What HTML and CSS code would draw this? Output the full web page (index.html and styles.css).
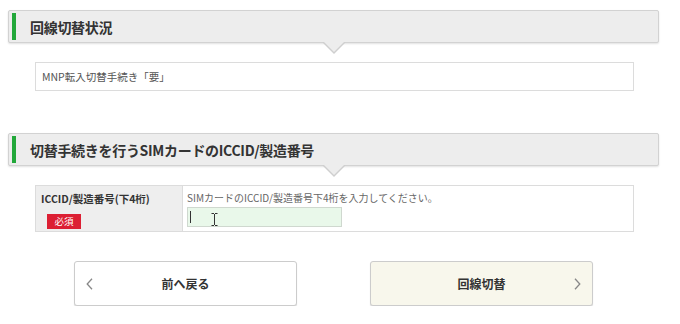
FILE: index.html
```html
<!DOCTYPE html>
<html lang="ja">
<head>
<meta charset="utf-8">
<link rel="stylesheet" href="styles.css">
</head>
<body>
<div class="page">
  <div class="section-head">
    <span class="bar"></span>
    <h2 class="title">回線切替状況</h2>
  </div>
  <div class="status-box">MNP転入切替手続き「要」</div>

  <div class="section-head second">
    <span class="bar"></span>
    <h2 class="title">切替手続きを行うSIMカードのICCID/製造番号</h2>
  </div>
  <div class="form-table">
    <div class="label-cell">
      <div class="label-text">ICCID/製造番号(下4桁)</div>
      <span class="badge">必須</span>
    </div>
    <div class="value-cell">
      <div class="hint">SIMカードのICCID/製造番号下4桁を入力してください。</div>
      <div class="input">
        <span class="caret"></span>
        <svg class="ibeam" width="7" height="13" viewBox="0 0 7 13"><path d="M0.5 0.5h2.5M4 0.5h2.5M3.5 1v11M0.5 12.5h2.5M4 12.5h2.5" stroke="#333" stroke-width="1" fill="none"/></svg>
      </div>
    </div>
  </div>

  <div class="buttons">
    <div class="btn back">
      <svg class="chev left" width="7" height="12" viewBox="0 0 7 12"><path d="M6 0.8L1.2 6L6 11.2" stroke="#888" stroke-width="1.3" fill="none"/></svg>
      <span class="btn-label">前へ戻る</span>
    </div>
    <div class="btn next">
      <span class="btn-label">回線切替</span>
      <svg class="chev right" width="7" height="12" viewBox="0 0 7 12"><path d="M1 0.8L5.8 6L1 11.2" stroke="#888" stroke-width="1.3" fill="none"/></svg>
    </div>
  </div>
</div>
</body>
</html>
```
FILE: styles.css
```css
* { box-sizing: border-box; }
body {
  margin: 0;
  background: #fff;
  font-family: "Noto Sans CJK JP", "Noto Sans", sans-serif;
  color: #333;
}
.page {
  width: 651px;
  margin-left: 8px;
  padding-top: 10px;
}
.section-head {
  position: relative;
  height: 33px;
  background: #ededed;
  border: 1px solid #d2d2d2;
  border-radius: 2px;
  box-shadow: 0 1px 2px rgba(0,0,0,0.12);
  display: flex;
  align-items: stretch;
  padding: 2px 3px;
}
.section-head::before,
.section-head::after {
  content: "";
  position: absolute;
  left: 50%;
  width: 0;
  height: 0;
  border-style: solid;
  border-color: transparent;
}
.section-head::before {
  bottom: -12px;
  margin-left: -12px;
  border-width: 12px 12px 0 12px;
  border-top-color: #cfcfcf;
}
.section-head::after {
  bottom: -10px;
  margin-left: -11px;
  border-width: 11px 11px 0 11px;
  border-top-color: #ededed;
}
.bar {
  width: 4px;
  background: #22a83a;
}
.title {
  margin: 0 0 0 14px;
  align-self: center;
  font-size: 14px;
  font-weight: bold;
  color: #333;
  letter-spacing: -0.3px;
}
.second { margin-top: 42px; }
.status-box {
  margin: 19px 0 0 27px;
  width: 599px;
  height: 29px;
  border: 1px solid #dcdcdc;
  display: flex;
  align-items: center;
  padding-left: 6px;
  font-size: 10.5px;
  color: #555;
}
.form-table {
  margin: 19px 0 0 27px;
  width: 599px;
  height: 47px;
  border: 1px solid #dcdcdc;
  display: flex;
}
.label-cell {
  width: 147px;
  background: #eeeeee;
  border-right: 1px solid #dcdcdc;
  padding: 6px 0 0 5px;
}
.label-text {
  font-size: 10.5px;
  font-weight: bold;
  color: #333;
  line-height: 14px;
}
.badge {
  display: inline-block;
  margin: 3px 0 0 6px;
  width: 34px;
  height: 15px;
  background: #dc1f33;
  color: #fff;
  font-size: 9.5px;
  line-height: 15px;
  text-align: center;
}
.value-cell {
  flex: 1;
  padding: 5px 0 0 4px;
}
.hint {
  font-size: 10px;
  color: #666;
  line-height: 14px;
}
.input {
  position: relative;
  margin-top: 2px;
  width: 155px;
  height: 20px;
  background: #e9f8ea;
  border: 1px solid #cfd8cf;
}
.caret {
  position: absolute;
  left: 2px;
  top: 3px;
  width: 1px;
  height: 12px;
  background: #333;
}
.ibeam {
  position: absolute;
  left: 23px;
  top: 5px;
}
.buttons {
  margin-top: 29px;
  display: flex;
  justify-content: center;
  gap: 73px;
}
.btn {
  position: relative;
  width: 223px;
  height: 45px;
  border: 1px solid #cccccc;
  border-radius: 3px;
  box-shadow: 0 1px 1px rgba(0,0,0,0.15);
  display: flex;
  align-items: center;
  justify-content: center;
  background: #fff;
}
.btn.next { background: #f8f7ec; }
.btn-label {
  font-size: 12px;
  font-weight: bold;
  color: #333;
}
.chev {
  position: absolute;
  top: 16px;
}
.chev.left { left: 11px; }
.chev.right { right: 11px; }
```
